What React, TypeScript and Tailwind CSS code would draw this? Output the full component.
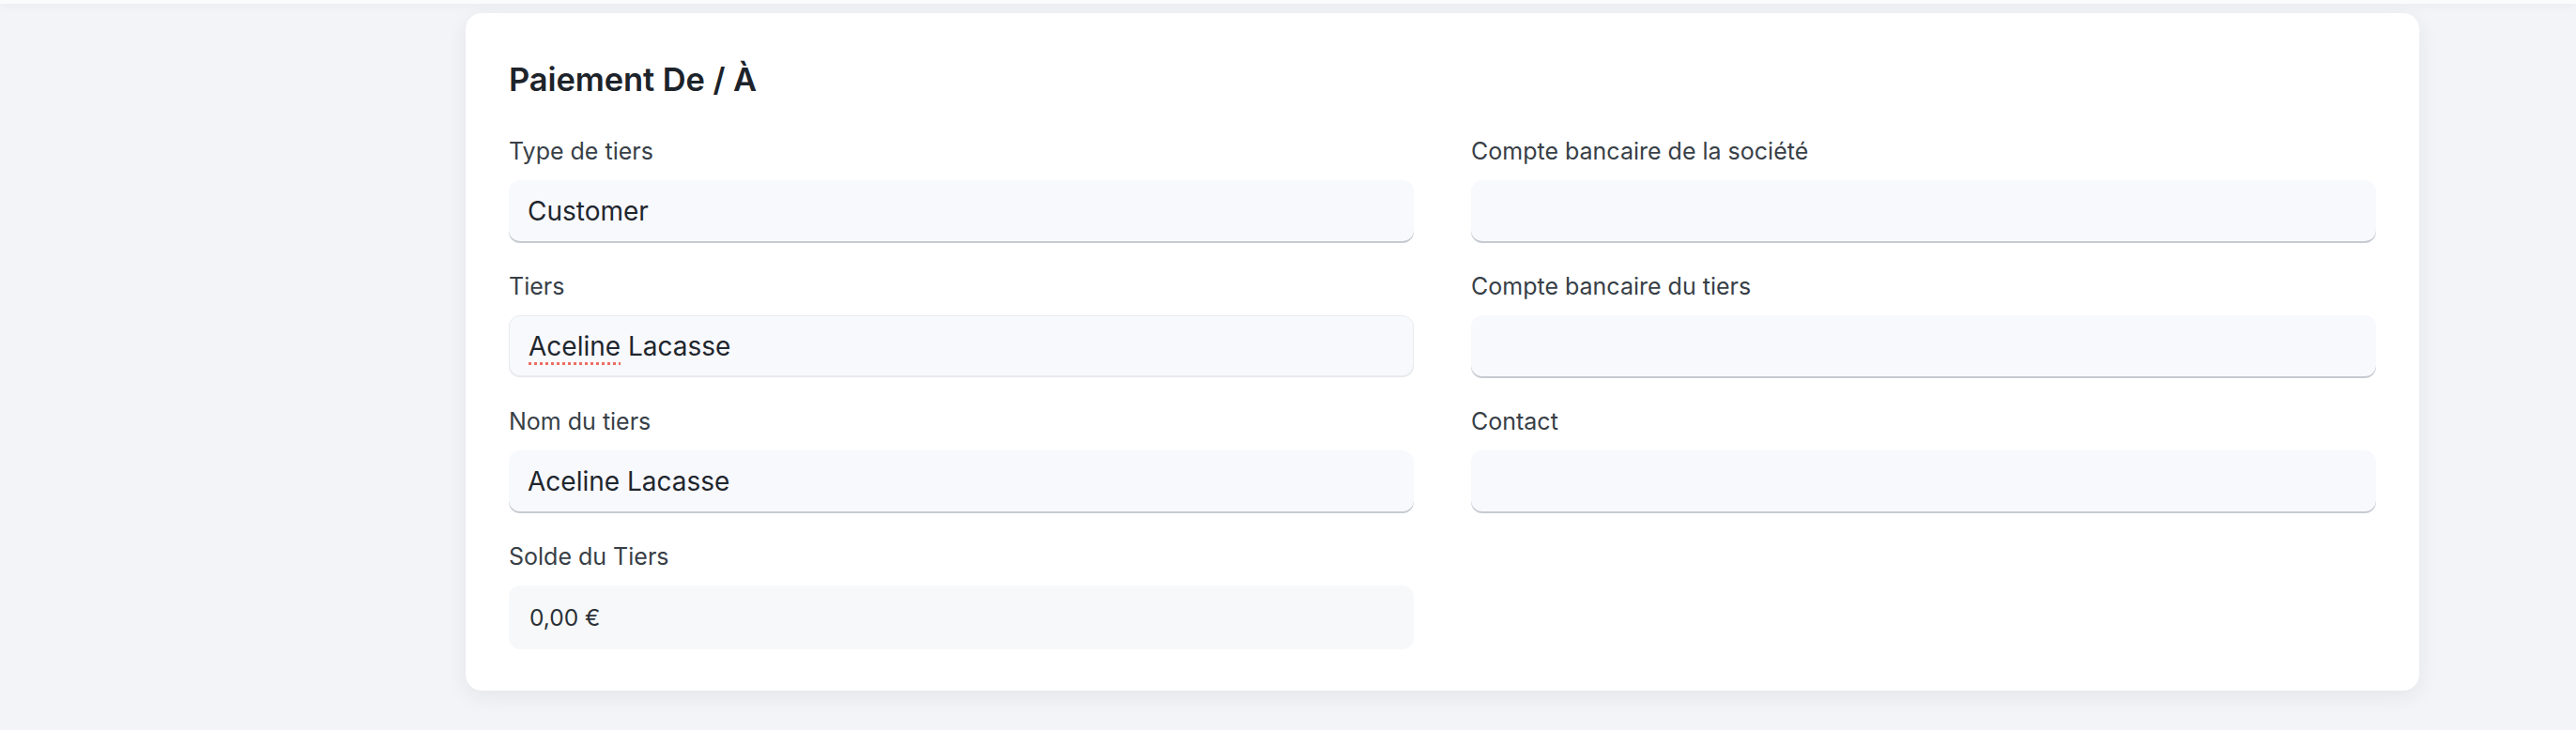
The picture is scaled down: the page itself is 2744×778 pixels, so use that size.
import React from "react";

const font = { fontFamily: "Inter, 'Noto Sans', sans-serif" };

function Label({ children }: { children: React.ReactNode }) {
  return (
    <div className="h-[34px] text-[25px] leading-[34px] text-[#383f47] mb-[14px] whitespace-nowrap">
      {children}
    </div>
  );
}

function Input({ children, bordered }: { children?: React.ReactNode; bordered?: boolean }) {
  return (
    <div
      className={
        "h-[65px] rounded-[12px] bg-[#f8f9fd] px-[20px] flex items-center text-[28px] text-[#1f262d] " +
        (bordered
          ? "border border-[#eaecf0] shadow-[0_1px_1px_0_#e3e6ea]"
          : "shadow-[0_2px_0_0_#c6cbd1]")
      }
    >
      {children}
    </div>
  );
}

function Field({ label, children, bordered }: { label: string; children?: React.ReactNode; bordered?: boolean }) {
  return (
    <div className="flex flex-col">
      <Label>{label}</Label>
      <Input bordered={bordered}>{children}</Input>
    </div>
  );
}

export default function App() {
  return (
    <div className="min-h-screen w-full bg-[#f3f4f7]" style={font}>
      <div className="h-[4px] bg-[#fafbfc] shadow-[0_3px_8px_rgba(0,0,0,0.05)]" />
      <div className="flex">
        <div className="w-[496px] shrink-0" />
        <div className="w-[2081px] mt-[10px] bg-white rounded-[17px] shadow-[0_6px_22px_rgba(30,40,60,0.07)] px-[46px] pt-[49px] pb-[44px]">
          <h2 className="h-[44px] text-[34.5px] leading-[44px] font-semibold text-[#1d232a] tracking-[-0.1px] mb-[37px]">
            Paiement De / À
          </h2>
          <div className="grid grid-cols-2 gap-x-[61px] gap-y-[31px]">
            <Field label="Type de tiers">Customer</Field>
            <Field label="Compte bancaire de la société" />
            <Field label="Tiers" bordered>
              <span>
                <span className="underline decoration-dotted decoration-[#ec6f63] decoration-[3px] underline-offset-[7px]">
                  Aceline
                </span>{" "}
                Lacasse
              </span>
            </Field>
            <Field label="Compte bancaire du tiers" />
            <Field label="Nom du tiers">Aceline Lacasse</Field>
            <Field label="Contact" />
            <div className="flex flex-col">
              <Label>Solde du Tiers</Label>
              <div className="h-[68px] rounded-[12px] bg-[#f7f8f9] px-[22px] flex items-center text-[24.5px] text-[#2b3137]">
                0,00 €
              </div>
            </div>
          </div>
        </div>
      </div>
    </div>
  );
}
